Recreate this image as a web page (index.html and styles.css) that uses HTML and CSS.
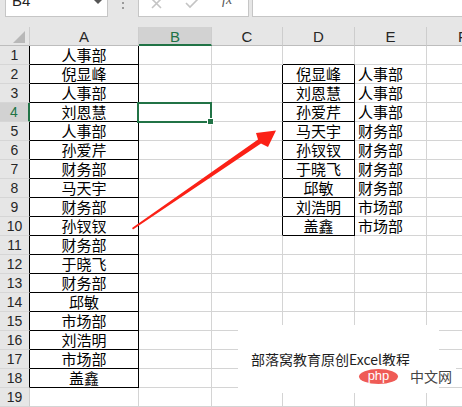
FILE: index.html
```html
<!DOCTYPE html>
<html lang="zh">
<head>
<meta charset="utf-8">
<title>Excel</title>
<link rel="stylesheet" href="styles.css">
</head>
<body>
<div class="app">
  <div class="fbar">
    <div class="namebox"><span class="nb-text">B4</span><span class="nb-caret"></span></div>
    <div class="dots"><span></span><span></span></div>
    <div class="btns">
      <svg class="ico" width="12" height="10" viewBox="0 0 12 10"><path d="M1 -1 L10 8 M10 -1 L1 8" stroke="#c4c4c4" stroke-width="1.6" fill="none"/></svg>
      <svg class="ico ok" width="14" height="10" viewBox="0 0 14 10"><path d="M1 3 L5 7 L13 -1" stroke="#c4c4c4" stroke-width="1.6" fill="none"/></svg>
      <span class="fx">fx</span>
    </div>
    <div class="finput"></div>
  </div>

  <div class="sheet">
    <div class="corner"><svg width="30" height="19" viewBox="0 0 30 19"><polygon points="25,4 25,16 13,16" fill="#b8b8b8"/></svg></div>
    <div class="ch">A</div><div class="ch sel-h">B</div><div class="ch">C</div><div class="ch">D</div><div class="ch">E</div><div class="ch">F</div>

    <div class="rh blk">1</div><div class="cell a">人事部</div><div class="cell"></div><div class="cell"></div><div class="cell dt"></div><div class="cell"></div><div class="cell"></div>
    <div class="rh blk">2</div><div class="cell a">倪显峰</div><div class="cell"></div><div class="cell cr"></div><div class="cell d">倪显峰</div><div class="cell e">人事部</div><div class="cell"></div>
    <div class="rh blk">3</div><div class="cell a">人事部</div><div class="cell"></div><div class="cell cr"></div><div class="cell d">刘恩慧</div><div class="cell e">人事部</div><div class="cell"></div>
    <div class="rh sel-r">4</div><div class="cell a">刘恩慧</div><div class="cell active"><div class="selbox"></div><div class="handle"></div></div><div class="cell cr"></div><div class="cell d">孙爱芹</div><div class="cell e">人事部</div><div class="cell"></div>
    <div class="rh blk">5</div><div class="cell a">人事部</div><div class="cell"></div><div class="cell cr"></div><div class="cell d">马天宇</div><div class="cell e">财务部</div><div class="cell"></div>
    <div class="rh blk">6</div><div class="cell a">孙爱芹</div><div class="cell"></div><div class="cell cr"></div><div class="cell d">孙钗钗</div><div class="cell e">财务部</div><div class="cell"></div>
    <div class="rh blk">7</div><div class="cell a">财务部</div><div class="cell"></div><div class="cell cr"></div><div class="cell d">于晓飞</div><div class="cell e">财务部</div><div class="cell"></div>
    <div class="rh blk">8</div><div class="cell a">马天宇</div><div class="cell"></div><div class="cell cr"></div><div class="cell d">邱敏</div><div class="cell e">财务部</div><div class="cell"></div>
    <div class="rh blk">9</div><div class="cell a">财务部</div><div class="cell"></div><div class="cell cr"></div><div class="cell d">刘浩明</div><div class="cell e">市场部</div><div class="cell"></div>
    <div class="rh blk">10</div><div class="cell a">孙钗钗</div><div class="cell"></div><div class="cell cr"></div><div class="cell d">盖鑫</div><div class="cell e">市场部</div><div class="cell"></div>
    <div class="rh blk">11</div><div class="cell a">财务部</div><div class="cell"></div><div class="cell"></div><div class="cell"></div><div class="cell"></div><div class="cell"></div>
    <div class="rh blk">12</div><div class="cell a">于晓飞</div><div class="cell"></div><div class="cell"></div><div class="cell"></div><div class="cell"></div><div class="cell"></div>
    <div class="rh blk">13</div><div class="cell a">财务部</div><div class="cell"></div><div class="cell"></div><div class="cell"></div><div class="cell"></div><div class="cell"></div>
    <div class="rh blk">14</div><div class="cell a">邱敏</div><div class="cell"></div><div class="cell"></div><div class="cell"></div><div class="cell"></div><div class="cell"></div>
    <div class="rh blk">15</div><div class="cell a">市场部</div><div class="cell"></div><div class="cell"></div><div class="cell"></div><div class="cell"></div><div class="cell"></div>
    <div class="rh blk">16</div><div class="cell a">刘浩明</div><div class="cell"></div><div class="cell"></div><div class="cell"></div><div class="cell"></div><div class="cell"></div>
    <div class="rh blk">17</div><div class="cell a">市场部</div><div class="cell"></div><div class="cell"></div><div class="cell"></div><div class="cell"></div><div class="cell"></div>
    <div class="rh blk">18</div><div class="cell a">盖鑫</div><div class="cell"></div><div class="cell"></div><div class="cell"></div><div class="cell"></div><div class="cell"></div>
    <div class="rh">19</div><div class="cell"></div><div class="cell"></div><div class="cell"></div><div class="cell"></div><div class="cell"></div><div class="cell"></div>
  </div>

  <svg class="arrow" width="462" height="407" viewBox="0 0 462 407">
    <polygon points="132,228 258,139.5 256,133 276,130.5 268,147 261,143.5 133,229.5" fill="#fb2116"/>
  </svg>

  <div class="wm">
    <div class="wm-text">部落窝教育原创Excel教程</div>
  </div>
  <div class="wm-logo">
    <span class="php">php</span><span class="cn">中文网</span>
  </div>
</div>
</body>
</html>
```

FILE: styles.css
```css
html, body {
  margin: 0;
  padding: 0;
  background: #ffffff;
  overflow: hidden;
}

.app {
  position: relative;
  width: 462px;
  height: 407px;
  overflow: hidden;
  font-family: "Liberation Sans", Arial, sans-serif;
}

/* formula bar */
.fbar {
  height: 27px;
  background: #e6e6e6;
  display: flex;
  align-items: flex-start;
}

.namebox {
  margin-left: 5px;
  width: 101px;
  height: 16px;
  background: #fff;
  border: 1px solid #c6c6c6;
  border-top: none;
  display: flex;
  align-items: flex-start;
  overflow: hidden;
}

.nb-text {
  margin-left: 6px;
  margin-top: -8px;
  font-size: 15px;
  line-height: 18px;
  color: #222;
}

.nb-caret {
  margin-left: auto;
  margin-right: 5px;
  margin-top: 0;
  width: 0;
  height: 0;
  border-left: 4px solid transparent;
  border-right: 4px solid transparent;
  border-top: 4px solid #555;
}

.dots {
  width: 30px;
  height: 16px;
  display: flex;
  flex-direction: column;
  align-items: center;
  gap: 3px;
  padding-top: 2px;
  box-sizing: border-box;
}

.dots span {
  width: 2px;
  height: 2px;
  background: #9a9a9a;
}

.btns {
  width: 109px;
  height: 16px;
  background: #fff;
  border: 1px solid #c6c6c6;
  border-top: none;
  display: flex;
  align-items: flex-start;
  overflow: hidden;
}

.ico {
  display: block;
  margin-left: 12px;
}

.ico.ok {
  margin-left: 22px;
}

.fx {
  margin-left: 23px;
  margin-top: -9px;
  font-family: "Liberation Serif", serif;
  font-style: italic;
  font-size: 14px;
  line-height: 18px;
  color: #555;
}

.finput {
  margin-left: 3px;
  flex: 1;
  height: 16px;
  background: #fff;
  border-left: 1px solid #c6c6c6;
  border-bottom: 1px solid #c6c6c6;
}

/* sheet grid */
.sheet {
  display: grid;
  grid-template-columns: 30px 109px 73px 71px 72px 72px 72px;
  grid-template-rows: repeat(20, 19px);
  width: 499px;
}

.sheet > div {
  box-sizing: border-box;
}

.corner {
  background: #e6e6e6;
  border-right: 1px solid #cdcdcd;
  border-bottom: 1px solid #bdbdbd;
}

.corner svg {
  display: block;
}

.ch {
  background: #e6e6e6;
  border-right: 1px solid #cdcdcd;
  border-bottom: 1px solid #bdbdbd;
  font-size: 15px;
  line-height: 19px;
  text-align: center;
  color: #262626;
}

.ch.sel-h {
  background: #d2d2d2;
  color: #217346;
  border-bottom: 2px solid #217346;
}

.rh {
  background: #e6e6e6;
  border-right: 1px solid #cdcdcd;
  border-bottom: 1px solid #d6d6d6;
  font-size: 14px;
  line-height: 19px;
  text-align: center;
  color: #262626;
}

.rh.blk {
  border-right-color: #000;
}

.rh.sel-r {
  background: #d2d2d2;
  color: #217346;
  border-right: 2px solid #217346;
}

.cell {
  border-right: 1px solid #d4d4d4;
  border-bottom: 1px solid #d4d4d4;
  font-family: "Noto Sans CJK SC", "Noto Sans", sans-serif;
  font-size: 15px;
  line-height: 18px;
  color: #000;
  white-space: nowrap;
  overflow: visible;
}

.cell.a {
  text-align: center;
  border-right-color: #000;
  border-bottom-color: #000;
}

.cell.dt {
  border-bottom-color: #000;
}

.cell.cr {
  border-right-color: #000;
}

.cell.d {
  text-align: center;
  border-right-color: #000;
  border-bottom-color: #000;
}

.cell.e {
  text-align: left;
  padding-left: 3px;
}

.cell.active {
  position: relative;
}

.selbox {
  position: absolute;
  left: -2px;
  top: -1px;
  width: 75px;
  height: 21px;
  box-sizing: border-box;
  border: 2px solid #217346;
}

.handle {
  position: absolute;
  left: 68px;
  top: 15px;
  width: 7px;
  height: 7px;
  box-sizing: border-box;
  border: 1px solid #fff;
  background: #217346;
}

/* overlays */
.arrow {
  position: absolute;
  left: 0;
  top: 0;
  pointer-events: none;
}

.wm {
  position: absolute;
  left: 238px;
  top: 325px;
  width: 201px;
  height: 68px;
  background: #fff;
}

.wm-text {
  position: absolute;
  left: 13px;
  top: 27px;
  font-family: "Noto Sans CJK SC", sans-serif;
  font-size: 14px;
  line-height: 14px;
  color: #1e1e1e;
  white-space: nowrap;
}

.wm-logo {
  position: absolute;
  left: 356px;
  top: 366px;
  width: 100px;
  height: 20px;
  background: #fff;
  display: flex;
  align-items: center;
}

.php {
  margin-left: 3px;
  width: 39px;
  height: 15px;
  border-radius: 50%;
  background: #ef5b56;
  color: #fff;
  font-family: "Liberation Sans", sans-serif;
  font-size: 13px;
  line-height: 14px;
  text-align: center;
}

.cn {
  margin-left: 12px;
  font-family: "Noto Sans CJK SC", sans-serif;
  font-size: 14px;
  line-height: 16px;
  color: #444;
}
```
